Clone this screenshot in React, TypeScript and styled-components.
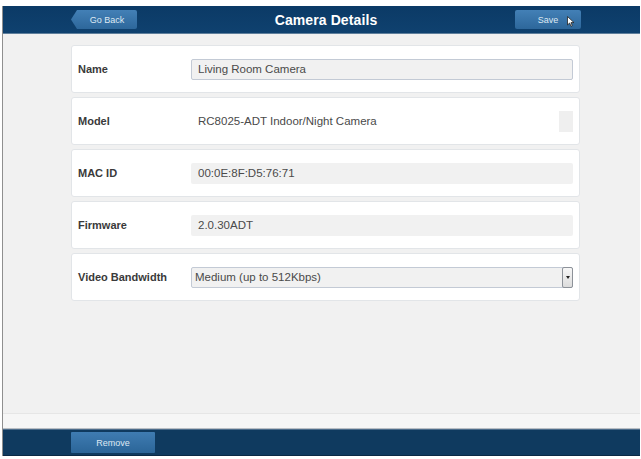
import React from "react";
import styled, { createGlobalStyle } from "styled-components";

const GlobalStyle = createGlobalStyle`
    html, body {
        margin: 0;
        padding: 0;
        background: #ffffff;
        font-family: "Liberation Sans", Arial, sans-serif;
    }
`;

const Page = styled.div`
    width: 641px;
    height: 459px;
    padding-top: 6px;
    box-sizing: border-box;
    background: #ffffff;
    overflow: hidden;
`;

const Frame = styled.div`
    margin-left: 2px;
    width: 637px;
    height: 450px;
    display: flex;
    flex-direction: column;
    border-left: 1px solid #8f8f8f;
    background: #f1f1f1;
`;

const Header = styled.div`
    height: 27px;
    flex: none;
    display: grid;
    grid-template-columns: 1fr auto 1fr;
    align-items: center;
    padding: 0 59px 0 68px;
    background: linear-gradient(#0b3a66, #0f416f);
    border-bottom: 1px solid #5f7f9c;
`;

const Title = styled.div`
    color: #ffffff;
    font-size: 14px;
    font-weight: bold;
    letter-spacing: 0.1px;
`;

const NavButton = styled.div<{ back?: boolean; }>`
    width: 66px;
    height: 19px;
    justify-self: ${props => props.back ? "start" : "end"};
    display: flex;
    align-items: center;
    justify-content: center;
    box-sizing: border-box;
    padding-left: ${props => props.back ? "6px" : "0"};
    color: #dfe9f3;
    font-size: 9px;
    background: linear-gradient(#4380b6, #2d679b);
    border-radius: 2px;
    clip-path: ${props => props.back
        ? "polygon(6px 0, 100% 0, 100% 100%, 6px 100%, 0 50%)"
        : "none"};
    position: relative;
`;

const Cursor = styled.svg`
    position: absolute;
    right: 6px;
    top: 6px;
`;

const Content = styled.div`
    flex: 1;
    display: flex;
    flex-direction: column;
    padding: 11px 0 0 68px;
    gap: 4px;
    border-bottom: 14px solid #f6f6f6;
    box-shadow: inset 0 -1px 0 #e6e6e6;
`;

const Card = styled.div`
    width: 509px;
    height: 48px;
    box-sizing: border-box;
    display: flex;
    align-items: center;
    padding: 0 6px;
    background: #ffffff;
    border: 1px solid #e2e5e8;
    border-radius: 3px;
`;

const Label = styled.div`
    width: 113px;
    flex: none;
    color: #3a3a3a;
    font-size: 11px;
    font-weight: bold;
`;

const Field = styled.div<{ kind: "input" | "plain" | "readonly" | "select"; }>`
    flex: 1;
    height: 21px;
    box-sizing: border-box;
    display: flex;
    align-items: center;
    position: relative;
    padding-left: ${props => props.kind === "select" ? "3px" : "6px"};
    font-size: 11.5px;
    color: #4a4a4a;
    border-radius: 2px;
    background: ${props => props.kind === "plain" ? "#ffffff" : "#f1f1f1"};
    border: ${props => props.kind === "input" || props.kind === "select"
        ? "1px solid #c3cad5"
        : "1px solid transparent"};
`;

const PlainGutter = styled.div`
    position: absolute;
    right: -1px;
    top: -1px;
    bottom: -1px;
    width: 14px;
    background: #efefef;
`;

const DropButton = styled.div`
    position: absolute;
    right: -1px;
    top: -1px;
    width: 11px;
    height: 21px;
    box-sizing: border-box;
    display: flex;
    align-items: center;
    justify-content: center;
    border: 1px solid #8d9299;
    border-radius: 2px;
    background: linear-gradient(#f7f7f7, #dcdcdc);

    &::after {
        content: "";
        width: 0;
        height: 0;
        border-left: 2px solid transparent;
        border-right: 2px solid transparent;
        border-top: 3px solid #222;
    }
`;

const Footer = styled.div`
    height: 27px;
    flex: none;
    display: flex;
    align-items: center;
    padding-left: 68px;
    background: #0f3a5f;
    border-top: 1px solid #b9bec4;
    box-shadow: inset 0 1px 0 #4c6c8b, inset 0 -1px 0 #0a2945;
`;

const FooterButton = styled.div`
    width: 84px;
    height: 21px;
    display: flex;
    align-items: center;
    justify-content: center;
    color: #dfe9f3;
    font-size: 9px;
    background: linear-gradient(#3f7cb2, #2b6598);
    border-radius: 1px;
`;

const rows = [
    { label: "Name", value: "Living Room Camera", kind: "input" as const },
    { label: "Model", value: "RC8025-ADT Indoor/Night Camera", kind: "plain" as const },
    { label: "MAC ID", value: "00:0E:8F:D5:76:71", kind: "readonly" as const },
    { label: "Firmware", value: "2.0.30ADT", kind: "readonly" as const },
    { label: "Video Bandwidth", value: "Medium (up to 512Kbps)", kind: "select" as const },
];

const App = () => {
    return (
        <Page>
            <GlobalStyle />
            <Frame>
                <Header>
                    <NavButton back>Go Back</NavButton>
                    <Title>Camera Details</Title>
                    <NavButton>
                        Save
                        <Cursor width="8" height="11" viewBox="0 0 8 11">
                            <path d="M0.5 0.5 L0.5 9 L2.6 7 L4 10.3 L5.3 9.7 L4 6.6 L7 6.6 Z" fill="#ffffff" stroke="#222" strokeWidth="0.8" />
                        </Cursor>
                    </NavButton>
                </Header>
                <Content>
                    {rows.map(row => (
                        <Card key={row.label}>
                            <Label>{row.label}</Label>
                            <Field kind={row.kind}>
                                {row.value}
                                {row.kind === "plain" && <PlainGutter />}
                                {row.kind === "select" && <DropButton />}
                            </Field>
                        </Card>
                    ))}
                </Content>
                <Footer>
                    <FooterButton>Remove</FooterButton>
                </Footer>
            </Frame>
        </Page>
    );
};

export default App;
